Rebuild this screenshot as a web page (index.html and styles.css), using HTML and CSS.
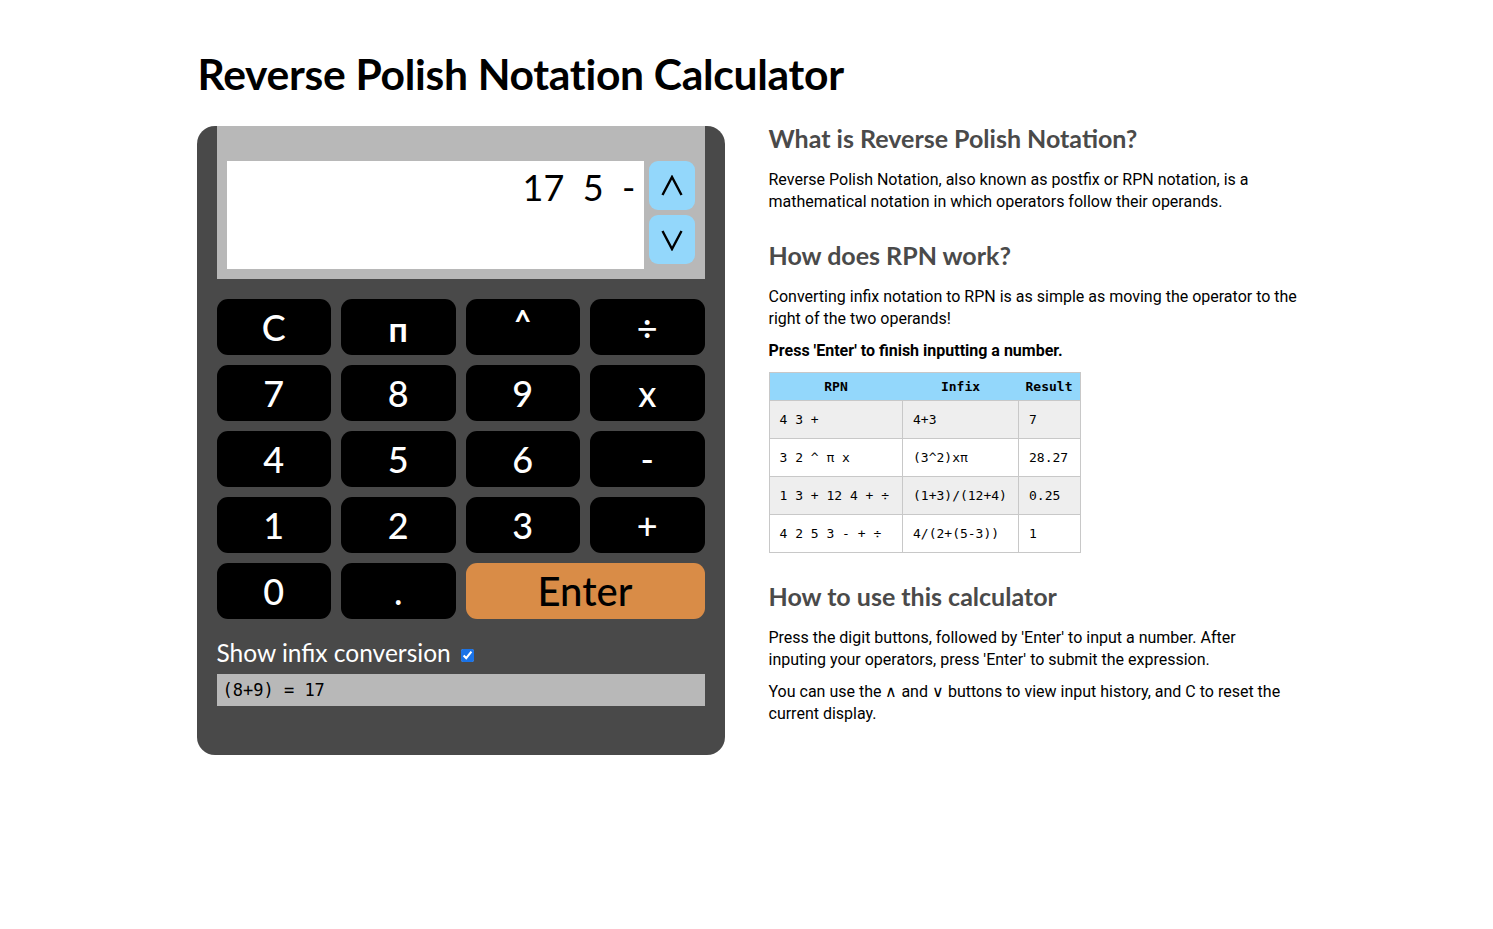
FILE: index.html
```html
<!DOCTYPE html>
<html>
<head>
<meta charset="utf-8">
<link rel="stylesheet" href="styles.css">
</head>
<body>
<div class="page">
  <h1 class="title">Reverse Polish Notation Calculator</h1>
  <div class="main">
    <div class="calc">
      <div class="screen">
        <div class="display">17&nbsp; 5&nbsp; -</div>
        <div class="arrows">
          <button class="arrow" aria-label="up"><svg width="22" height="22" viewBox="0 0 22 22"><polyline points="1.5,20 11,2 20.5,20" fill="none" stroke="#000" stroke-width="2.4"/></svg></button>
          <button class="arrow" aria-label="down"><svg width="22" height="22" viewBox="0 0 22 22"><polyline points="1.5,2 11,20 20.5,2" fill="none" stroke="#000" stroke-width="2.4"/></svg></button>
        </div>
      </div>
      <div class="keys">
        <button class="key">C</button>
        <button class="key pi">&#x43F;</button>
        <button class="key caret">^</button>
        <button class="key">&divide;</button>
        <button class="key">7</button>
        <button class="key">8</button>
        <button class="key">9</button>
        <button class="key">x</button>
        <button class="key">4</button>
        <button class="key">5</button>
        <button class="key">6</button>
        <button class="key">-</button>
        <button class="key">1</button>
        <button class="key">2</button>
        <button class="key">3</button>
        <button class="key">+</button>
        <button class="key">0</button>
        <button class="key">.</button>
        <button class="key enter">Enter</button>
      </div>
      <label class="toggle">Show infix conversion <input type="checkbox" checked></label>
      <div class="infix">(8+9) = 17</div>
    </div>
    <div class="info">
      <h2>What is Reverse Polish Notation?</h2>
      <p>Reverse Polish Notation, also known as postfix or RPN notation, is a mathematical notation in which operators follow their operands.</p>
      <h2 class="h2b">How does RPN work?</h2>
      <p>Converting infix notation to RPN is as simple as moving the operator to the right of the two operands!</p>
      <p class="bold">Press 'Enter' to finish inputting a number.</p>
      <table class="examples">
        <thead>
          <tr><th class="c1">RPN</th><th class="c2">Infix</th><th class="c3">Result</th></tr>
        </thead>
        <tbody>
          <tr><td>4 3 +</td><td>4+3</td><td>7</td></tr>
          <tr><td>3 2 ^ &pi; x</td><td>(3^2)x&pi;</td><td>28.27</td></tr>
          <tr><td>1 3 + 12 4 + &divide;</td><td>(1+3)/(12+4)</td><td>0.25</td></tr>
          <tr><td>4 2 5 3 - + &divide;</td><td>4/(2+(5-3))</td><td>1</td></tr>
        </tbody>
      </table>
      <h2 class="h2c">How to use this calculator</h2>
      <p class="usage">Press the digit buttons, followed by 'Enter' to input a number. After inputing your operators, press 'Enter' to submit the expression.</p>
      <p class="usage">You can use the &#x2227; and &#x2228; buttons to view input history, and C to reset the current display.</p>
    </div>
  </div>
</div>
</body>
</html>
```

FILE: styles.css
```css
html, body {
  margin: 0;
  padding: 0;
  background: #ffffff;
}
body {
  font-family: Roboto, "Liberation Sans", sans-serif;
  color: #000;
}
.page {
  width: 1100px;
  margin: 0 auto;
  padding-top: 50px;
}
.title {
  font-family: Lato, "Open Sans", sans-serif;
  font-weight: 700;
  font-size: 42.6px;
  line-height: 48px;
  margin: 0 0 28px 1px;
  color: #000;
  letter-spacing: -0.3px;
}
.main {
  display: flex;
  align-items: flex-start;
  gap: 44px;
}
.calc {
  width: 488px;
  flex: none;
  background: #494949;
  border-radius: 18px;
  padding: 0 20px 49px;
}
.screen {
  background: #b8b8b8;
  padding: 35px 10px 10px;
  display: flex;
  gap: 5px;
}
.display {
  flex: 1;
  height: 108px;
  background: #fff;
  font-family: Lato, "Open Sans", sans-serif;
  font-size: 36px;
  line-height: 52px;
  text-align: right;
  padding-right: 8px;
  box-sizing: border-box;
  color: #000;
}
.arrows {
  display: flex;
  flex-direction: column;
  gap: 5px;
}
.arrow {
  width: 46px;
  height: 49px;
  border: none;
  border-radius: 9px;
  background: #93d7fb;
  padding: 0;
  display: flex;
  align-items: center;
  justify-content: center;
}
.arrow svg {
  display: block;
}
.keys {
  display: grid;
  grid-template-columns: repeat(4, 1fr);
  gap: 10px;
  margin-top: 20px;
}
.key {
  height: 56px;
  border: none;
  border-radius: 11px;
  background: #000;
  color: #fff;
  font-family: Lato, "Open Sans", sans-serif;
  font-size: 36px;
  font-weight: 500;
  line-height: 56px;
  padding: 0;
}
.key.pi {
  font-weight: 700;
  font-size: 34px;
  padding-top: 2px;
}
.key.caret {
  font-size: 30px;
  line-height: 40px;
  align-self: stretch;
  padding-bottom: 14px;
  font-weight: 700;
}
.key.enter {
  grid-column: span 2;
  background: #d98c47;
  color: #000;
  font-size: 40px;
}
.toggle {
  display: flex;
  align-items: center;
  gap: 8px;
  margin-top: 18px;
  color: #fff;
  font-family: Lato, "Open Sans", sans-serif;
  font-size: 24.5px;
  line-height: 32px;
}
.toggle input {
  width: 13px;
  height: 13px;
  margin: 4px 0 0 2px;
  accent-color: #1a73e8;
}
.infix {
  margin-top: 5px;
  background: #b8b8b8;
  height: 32px;
  line-height: 32px;
  padding-left: 6px;
  font-family: "DejaVu Sans Mono", monospace;
  font-size: 17px;
  color: #000;
}
.info {
  flex: none;
  width: 531px;
}
.info h2 {
  font-family: Lato, "Open Sans", sans-serif;
  font-weight: 700;
  font-size: 25px;
  line-height: 28px;
  color: #4a4a4a;
  margin: -2px 0 17px;
}
.info .h2b {
  margin-top: 28px;
}
.info .h2c {
  margin-top: 29px;
}
.info p {
  font-size: 16px;
  line-height: 22px;
  margin: 0 0 10px;
}
.info p.usage {
  max-width: 515px;
}
.info p.bold {
  font-weight: 700;
  margin-bottom: 10px;
}
.examples {
  border-collapse: collapse;
  font-family: "DejaVu Sans Mono", monospace;
  font-size: 13px;
  border: 1px solid #c8c8c8;
}
.examples th {
  background: #93d7fb;
  font-weight: 700;
  height: 27px;
  padding: 0 4px;
  text-align: center;
  border-bottom: 1px solid #c8c8c8;
}
.examples .c1 { width: 125px; }
.examples .c2 { width: 108px; }
.examples .c3 { width: 53px; }
.examples td {
  height: 37px;
  padding: 0 10px;
  border: 1px solid #c8c8c8;
  white-space: pre;
}
.examples tbody tr:nth-child(odd) td {
  background: #eeeeee;
}
```
